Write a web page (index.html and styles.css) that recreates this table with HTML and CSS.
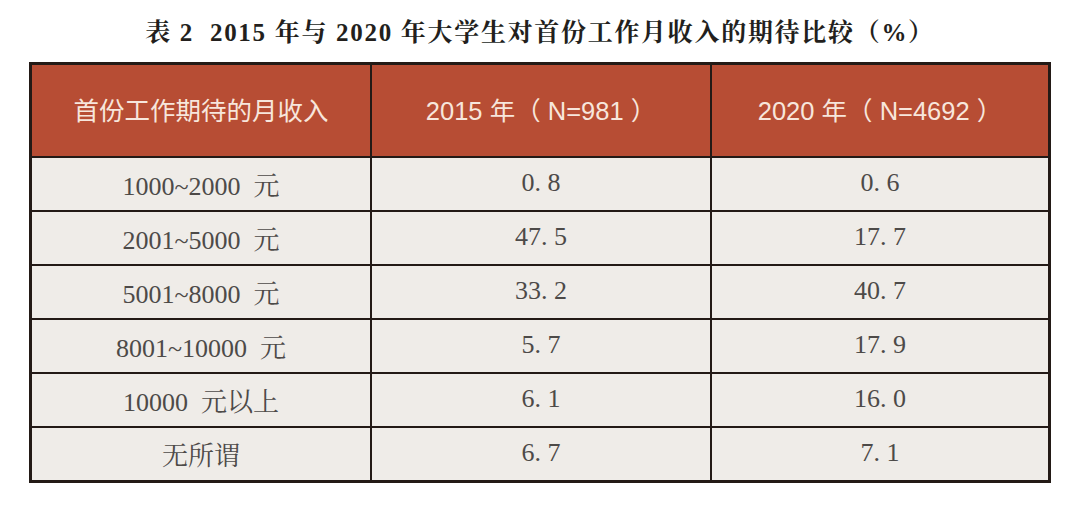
FILE: index.html
```html
<!DOCTYPE html>
<html lang="zh-CN">
<head>
<meta charset="utf-8">
<title>表2</title>
<link rel="stylesheet" href="styles.css">
</head>
<body>
<div class="page">
  <h1 class="title">表 2&nbsp;&nbsp;2015 年与 2020 年大学生对首份工作月收入的期待比较（%）</h1>
  <div class="table">
    <div class="row head">
      <div class="cell">首份工作期待的月收入</div>
      <div class="cell">2015 年（ N=981 ）</div>
      <div class="cell">2020 年（ N=4692 ）</div>
    </div>
    <div class="row">
      <div class="cell">1000~2000&nbsp;&nbsp;元</div>
      <div class="cell">0. 8</div>
      <div class="cell">0. 6</div>
    </div>
    <div class="row">
      <div class="cell">2001~5000&nbsp;&nbsp;元</div>
      <div class="cell">47. 5</div>
      <div class="cell">17. 7</div>
    </div>
    <div class="row">
      <div class="cell">5001~8000&nbsp;&nbsp;元</div>
      <div class="cell">33. 2</div>
      <div class="cell">40. 7</div>
    </div>
    <div class="row">
      <div class="cell">8001~10000&nbsp;&nbsp;元</div>
      <div class="cell">5. 7</div>
      <div class="cell">17. 9</div>
    </div>
    <div class="row">
      <div class="cell">10000&nbsp;&nbsp;元以上</div>
      <div class="cell">6. 1</div>
      <div class="cell">16. 0</div>
    </div>
    <div class="row">
      <div class="cell">无所谓</div>
      <div class="cell">6. 7</div>
      <div class="cell">7. 1</div>
    </div>
  </div>
</div>
</body>
</html>
```
FILE: styles.css
```css
html, body {
  margin: 0;
  padding: 0;
  background: #ffffff;
}
.page {
  width: 1080px;
  height: 514px;
  overflow: hidden;
}
.title {
  margin: 0;
  height: 62px;
  box-sizing: border-box;
  padding: 18px 0 0 0;
  text-align: center;
  font-family: "Liberation Serif", "Noto Serif CJK SC", "Noto Sans CJK SC", serif;
  font-weight: bold;
  font-size: 25px;
  line-height: 30px;
  letter-spacing: 1.7px;
  color: #231f1d;
}
.table {
  margin-left: 29px;
  width: 1022px;
  box-sizing: border-box;
  border: 3px solid #231a16;
  background: #efece8;
}
.row {
  display: grid;
  grid-template-columns: 338px 340px 338px;
  height: 54px;
  border-top: 2px solid #231a16;
  box-sizing: border-box;
}
.row.head {
  height: 91px;
  border-top: none;
  background: #b74d34;
}
.cell {
  display: flex;
  align-items: center;
  justify-content: center;
  font-family: "Liberation Serif", "Noto Serif CJK SC", "Noto Sans CJK SC", serif;
  font-size: 26px;
  color: #4d4a48;
  padding-bottom: 2px;
}
.cell + .cell {
  border-left: 2px solid #231a16;
}
.head .cell {
  font-family: "Liberation Sans", "Noto Sans CJK SC", sans-serif;
  font-size: 25.5px;
  color: #f7e6dc;
  padding-bottom: 4px;
}
```
